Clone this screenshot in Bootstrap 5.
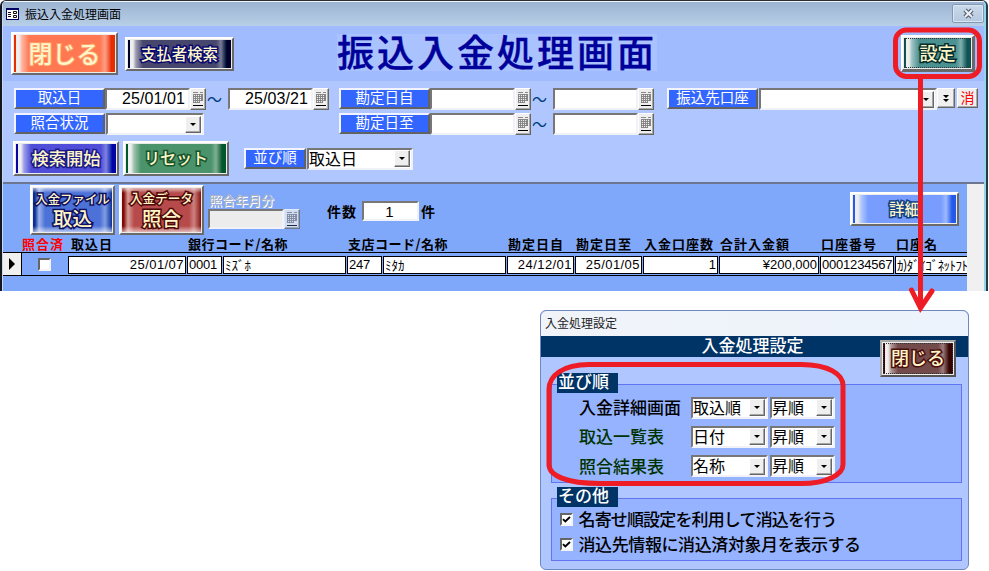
<!DOCTYPE html>
<html lang="ja">
<head>
<meta charset="utf-8">
<title>振込入金処理画面</title>
<link href="https://cdn.jsdelivr.net/npm/bootstrap@5.3.0/dist/css/bootstrap.min.css" rel="stylesheet">
<style>
body{width:989px;height:571px;background:#fff;font-family:"Liberation Sans","Noto Sans CJK JP",sans-serif;font-size:14px;line-height:1;color:#000}
.jp{font-family:"Noto Sans CJK JP",sans-serif}
/* main window */
.win-main{left:0;top:0;width:988px;height:291px;background:#b0c6ff;border-top:1px solid #2d2d33;border-left:2px solid #16171d;border-right:2px solid #2a3844;border-radius:6px 6px 0 0;overflow:hidden}
.win-inner{border-left:1px solid #c3dcf5;border-right:2px solid #8fd6ee;border-top:1px solid #eef5fc;height:290px}
.bar-title{height:24px;background:linear-gradient(#9cb4d2,#b8cfe7);padding-left:3px;font-size:12px}
.bar-title .jp{margin-left:6px}
.x-btn{width:32px;height:19px;border:1px solid #8499b2;border-radius:2px;background:linear-gradient(#cbdaeb,#b5c8df);box-shadow:inset 0 0 0 1px #d9e5f2;margin:0 0 2px auto}
.x-btn svg{flex:none}
.band-head{height:55px;background:#a0bcff;padding:6px 9px 0 8px}
.band-filter{height:101px;padding:7px 0 0 11px}
.band-list{height:109px;border-top:2px solid #6d7690;background:#80a8fa}
/* picture buttons */
.pbtn{border:2px solid;border-color:#fff #6a6a6a #6a6a6a #fff;padding:1px;background:#ececec;flex:none}
.pface{height:100%;color:#fff6c8;white-space:nowrap;font-weight:500;background:linear-gradient(90deg,var(--d) 0 2px,#eee 2px 5px,color-mix(in srgb,var(--c),#fff 45%) 8px,var(--c) 15px calc(100% - 15px),color-mix(in srgb,var(--c),#fff 28%) calc(100% - 10px),var(--d) calc(100% - 4px))}
.pface .jp{-webkit-text-stroke:3px var(--o);paint-order:stroke fill;line-height:1.1;padding-bottom:1px}
.f-orange{--c:#ff7852;--d:#e62d00;--o:#ff9c68}
.f-ink{--c:#47476d;--d:#000029;--o:#080870}
.f-teal{--c:#4c9191;--d:#0b5555;--o:#062d2d}
.f-indigo{--c:#504ed8;--d:#0505a5;--o:#1a1a88}
.f-green{--c:#4a936b;--d:#00582c;--o:#16542c}
.f-blue{--c:#4c72d8;--d:#0c2d98;--o:#101060}
.f-red{--c:#b74b4b;--d:#850808;--o:#4e0808}
.f-sky{--c:#789dff;--d:#2459ea;--o:#123f87}
.f-brown{--c:#744b4b;--d:#350505;--o:#4b0d0d}
.sq .pface{background:linear-gradient(#ffffff99 0,#ffffff00 5px calc(100% - 6px),#ffffff99),linear-gradient(90deg,var(--d) 0 2px,color-mix(in srgb,var(--c),#fff 45%) 6px,var(--c) 12px calc(100% - 12px),color-mix(in srgb,var(--c),#fff 30%) calc(100% - 7px),var(--d))}
.sq .pface .jp{line-height:1;padding:0}
.b-close{width:107px;height:43px}.b-close .jp{font-size:24px;-webkit-text-stroke-width:2px}
.b-payer{width:109px;height:34px;margin:5px 0 0 7px}.b-payer .jp{font-size:15.4px}
.b-set{width:74px;height:37px;margin:3px 0 0 auto;border-right-width:3px;border-bottom-width:3px}.b-set .jp{font-size:18px}
.b-mid{width:106px;height:35px}.b-mid .jp{font-size:17.3px}.b-mid .t-reset{font-size:16px}
.b-sq{width:85px;height:50px;margin-top:1px}
.t-file{font-size:12.4px}.t-data{font-size:12.6px}.t-big{font-size:19.5px;margin-top:3px}
.b-det{width:109px;height:34px}.b-det .jp{font-size:15.5px}
.dotted-in{outline:1px dotted #333;outline-offset:-1px}
.big-title{font-size:37px;letter-spacing:3px;color:#00009a;font-weight:500;line-height:35px;width:320px;height:37px;margin:2px 0 0 103px;white-space:nowrap;background:#aac3ff;-webkit-text-stroke:.4px #00009a}
/* form parts */
.tag{width:91px;height:21px;background:#3366ff;border:2px solid;border-color:#f2f5ff #626262 #626262 #f2f5ff;color:#fff;font-size:14.5px;flex:none;padding-bottom:2px}
.fld{height:22px;border:2px solid;border-color:#777 #f0f2f8 #f0f2f8 #777;background:#fff;flex:none;padding:0 4px 0 2px;white-space:nowrap}
.date{width:85px;font-size:16px;letter-spacing:.1px;padding-right:3px}
.calb{width:16px;height:22px;background:#efefef;border:1px solid;border-color:#fff #666 #666 #fff;box-shadow:inset -1px -1px 0 #aaa;flex:none}
.calb svg{flex:none}
.tilde{width:22px;color:#003c80;font-size:15px;flex:none;padding-left:1px}
.combo{height:22px;padding:0 1px;font-size:16px}
.lbl{padding-bottom:2px;margin-left:-1px}
.drop{width:16px;height:17px;background:#efefef;border:1px solid;border-color:#fff #666 #666 #fff;box-shadow:inset -1px -1px 0 #a5a5a5;flex:none}
.drop::after{content:"";border:3px solid transparent;border-top-color:#000;border-bottom:0}
.w98{width:98px;margin:0 135px 0 1px}.w106{width:106px;margin-left:1px}.w179{width:178px;margin-left:1px}.w76{width:77px}.w64{width:65px;margin-left:2px}
.g10{margin-left:10px}.g13{margin-left:13px}
.mini{height:20px;background:#f0f0f0;border:1px solid;border-color:#fff #666 #666 #fff;box-shadow:inset -1px -1px 0 #aaa;font-size:14px;color:red;flex:none}
.m-down{width:18px}.m-clear{width:21px;margin-left:2px;padding-bottom:2px}
.h-row{height:25px}
.r-go{margin:3px 0 0 -1px}
.t-sort{width:62px;margin-left:15px}
/* list area */
.tools{height:51px;padding-left:27px}
.dis{color:#a9b3c6;text-shadow:1px 1px 0 #fff;font-size:13px;font-weight:500;margin:8px 0 2px 1px;line-height:15px}
.dis-f{width:76px;height:20px;background:#ececec}
.dis-c{height:20px}
.count{margin:17px 0 0 27px}
.count .jp{font-size:14px}
.count .fld{width:57px;height:20px;margin:0 2px 0 5px;font-size:15px}
.bold-t{font-weight:700;font-size:13px;letter-spacing:1px;white-space:nowrap}
.mixed{letter-spacing:.5px}
.cols{display:grid;grid-template-columns:19px 45px 119px 36px 124px 36px 124px 68px 68px 76px 101px 75px 73px;width:964px}
.heads{height:17px;line-height:17px}
.heads>*{padding-left:2px}
.red{color:#f00}
.rec{height:24px;border:solid #000;border-width:1px 0;background:#80a8fa}
.rec>.cell{height:18px;margin:3px 0 0 1px;border:1px solid #000;background:#fff;font-size:13px;line-height:15px;padding:0 1px;white-space:nowrap;overflow:hidden}
.rec>.last{border-right:0;letter-spacing:-.55px}
.dt{letter-spacing:.45px}.num{letter-spacing:-.2px}
.sel{background:#f0f0f0;border-right:1px solid #000}
.cbx{width:13px;height:13px;background:#fff;border:2px solid;border-color:#666 #f4f4f4 #f4f4f4 #666;flex:none}
.gutter{width:17px;background:#f0f0f0;flex:none}
/* settings dialog */
.win-dlg{left:540px;top:310px;width:429px;height:260px;background:#b0c6ff;border:1px solid #6e87bd;border-radius:6px}
.dlg-t{height:25px;background:linear-gradient(90deg,#f0f4f9,#edf3fc);border-radius:6px 6px 0 0;font-size:12px;padding:0 0 1px 4px;color:#222}
.dlg-h{height:21px;background:#003366;color:#fff;font-size:17px;padding:0 4px 4px 0;font-weight:500}
.b-dclose{left:339px;top:29px;width:76px;height:37px;border-color:#aaa #555 #555 #aaa}.b-dclose .jp{font-size:18px}
.grp{width:411px;margin-left:10px;border:1px solid #6274f0;background:#96b3ff}
.grp-1{height:99px;margin-top:27px}.grp-2{height:63px;margin-top:15px}
.cap{width:61px;height:20px;background:#003366;color:#fff;font-size:17px;font-weight:500;margin:-12px 0 0 5px;padding:0 0 5px 1px}
.opt{font-size:17px;white-space:nowrap;font-weight:500;padding-bottom:2px}
.r-sort{height:29.3px;padding-left:27px}.r-sort .opt{width:112px}
.grn{color:#003300}
.r-chk{height:25px;padding-left:8px;gap:5.5px}
.tight{letter-spacing:-.85px;padding-bottom:3px}.snug{letter-spacing:-.4px;padding-bottom:3px}
.notes{left:0;top:0}
</style>
</head>
<body class="position-relative overflow-hidden m-0">
<svg width="0" height="0" class="position-absolute">
  <symbol id="cal" viewBox="0 0 12 16"><path d="M1 1.500h5M8 1.500h3" stroke="#888"/><path d="M1 3.500h10M1 5.500h10M1 7.500h10M1 9.500h10M1 11.500h7M1.500 3v9M3.500 3v9M5.500 3v9M7.500 3v9M9.500 3v7M10.500 3v7" stroke="#808080" stroke-width=".9"/><path d="M1 14.500h10" stroke="#000"/></symbol>
  <symbol id="chk" viewBox="0 0 9 9"><path d="M1 4.200l2.300 2.300L8 2" fill="none" stroke="#000" stroke-width="1.900"/></symbol>
</svg>

<main class="win-main position-absolute"><div class="win-inner">
  <div class="bar-title d-flex align-items-center">
    <svg width="13" height="12" viewBox="0 0 13 12"><path fill="#000060" d="M0 0h13v12H0z"/><path fill="#fff" d="M1 2h11v9H1z"/><path d="M2 4.500h3M2 6.500h3M2 8.500h3M7.500 3.500h3v2h-3zM7.500 7.500h3v2h-3z" stroke="#111" fill="none"/></svg>
    <span class="jp">振込入金処理画面</span>
    <div class="x-btn d-flex align-items-center justify-content-center"><svg width="13" height="11" viewBox="0 0 13 11"><path d="M3 2l7 7M10 2l-7 7" stroke="#555b6b" stroke-width="4.400"/><path d="M3 2l7 7M10 2l-7 7" stroke="#e8eef6" stroke-width="2.200"/></svg></div>
  </div>

  <header class="band-head d-flex align-items-start">
    <div class="pbtn b-close"><div class="pface f-orange d-flex align-items-center justify-content-center"><span class="jp">閉じる</span></div></div>
    <div class="pbtn b-payer"><div class="pface f-ink d-flex align-items-center justify-content-center"><span class="jp">支払者検索</span></div></div>
    <h1 class="big-title jp mb-0">振込入金処理画面</h1>
    <div class="pbtn b-set"><div class="pface f-teal dotted-in d-flex align-items-center justify-content-center"><span class="jp">設定</span></div></div>
  </header>

  <section class="band-filter">
    <div class="d-flex h-row align-items-start">
      <div class="tag jp d-flex align-items-center justify-content-center">取込日</div>
      <div class="fld date d-flex align-items-center justify-content-end">25/01/01</div>
      <div class="calb d-flex align-items-center justify-content-center"><svg width="12" height="16"><use href="#cal"/></svg></div>
      <div class="tilde jp lh-base">～</div>
      <div class="fld date d-flex align-items-center justify-content-end">25/03/21</div>
      <div class="calb d-flex align-items-center justify-content-center"><svg width="12" height="16"><use href="#cal"/></svg></div>
      <div class="tag g10 jp d-flex align-items-center justify-content-center">勘定日自</div>
      <div class="fld date"></div>
      <div class="calb d-flex align-items-center justify-content-center"><svg width="12" height="16"><use href="#cal"/></svg></div>
      <div class="tilde jp lh-base">～</div>
      <div class="fld date"></div>
      <div class="calb d-flex align-items-center justify-content-center"><svg width="12" height="16"><use href="#cal"/></svg></div>
      <div class="tag g13 jp d-flex align-items-center justify-content-center">振込先口座</div>
      <div class="fld combo w179 d-flex align-items-center justify-content-end"><span class="drop d-flex align-items-center justify-content-center"></span></div>
      <div class="mini m-down d-flex align-items-center justify-content-center"><svg width="8" height="9" viewBox="0 0 8 9"><path d="M1 1h6L4 4zM1 5h6L4 8z"/></svg></div>
      <div class="mini m-clear jp d-flex align-items-center justify-content-center">消</div>
    </div>
    <div class="d-flex h-row align-items-start">
      <div class="tag jp d-flex align-items-center justify-content-center">照合状況</div>
      <div class="fld combo w98 d-flex align-items-center justify-content-end"><span class="drop d-flex align-items-center justify-content-center"></span></div>
      <div class="tag jp d-flex align-items-center justify-content-center">勘定日至</div>
      <div class="fld date"></div>
      <div class="calb d-flex align-items-center justify-content-center"><svg width="12" height="16"><use href="#cal"/></svg></div>
      <div class="tilde jp lh-base">～</div>
      <div class="fld date"></div>
      <div class="calb d-flex align-items-center justify-content-center"><svg width="12" height="16"><use href="#cal"/></svg></div>
    </div>
    <div class="d-flex align-items-center r-go">
      <div class="pbtn b-mid"><div class="pface f-indigo d-flex align-items-center justify-content-center"><span class="jp">検索開始</span></div></div>
      <div class="pbtn b-mid ms-1"><div class="pface f-green d-flex align-items-center justify-content-center"><span class="jp t-reset">リセット</span></div></div>
      <div class="tag t-sort jp d-flex align-items-center justify-content-center">並び順</div>
      <div class="fld combo w106 jp d-flex align-items-center justify-content-between"><span class="lbl">取込日</span><span class="drop d-flex align-items-center justify-content-center"></span></div>
    </div>
  </section>

  <section class="band-list d-flex">
    <div class="flex-fill">
      <div class="tools d-flex align-items-start">
        <div class="pbtn b-sq sq"><div class="pface f-blue d-flex flex-column align-items-center justify-content-center"><span class="jp t-file">入金ファイル</span><span class="jp t-big">取込</span></div></div>
        <div class="pbtn b-sq sq ms-1"><div class="pface f-red d-flex flex-column align-items-center justify-content-center"><span class="jp t-data">入金データ</span><span class="jp t-big">照合</span></div></div>
        <div class="ms-1">
          <div class="dis jp">照合年月分</div>
          <div class="d-flex"><div class="fld dis-f"></div><div class="calb dis-c opacity-75 d-flex align-items-center justify-content-center"><svg width="12" height="16"><use href="#cal"/></svg></div></div>
        </div>
        <div class="count d-flex align-items-center">
          <span class="bold-t jp">件数</span>
          <div class="fld d-flex align-items-center justify-content-center">1</div>
          <span class="bold-t jp">件</span>
        </div>
        <div class="pbtn b-det ms-auto mt-2"><div class="pface f-sky d-flex align-items-center justify-content-center"><span class="jp">詳細</span></div></div>
        <div class="pe-2 me-0"></div>
      </div>
      <div class="cols heads bold-t jp">
        <span class="red" style="grid-column:1/3;padding-left:19px">照合済</span><span class="ps-1">取込日</span>
        <span class="mixed" style="grid-column:4/6">銀行コード/名称</span><span class="mixed" style="grid-column:6/8">支店コード/名称</span>
        <span>勘定日自</span><span>勘定日至</span><span>入金口座数</span><span>合計入金額</span><span>口座番号</span><span>口座名</span>
      </div>
      <div class="cols rec">
        <div class="sel d-flex align-items-center justify-content-center"><svg width="8" height="12" viewBox="0 0 8 12"><path d="M1 0l6 6-6 6z"/></svg></div>
        <div class="d-flex align-items-center ps-3"><span class="cbx"></span></div>
        <div class="cell dt text-end">25/01/07</div>
        <div class="cell num">0001</div>
        <div class="cell jp">ﾐｽﾞﾎ</div>
        <div class="cell num">247</div>
        <div class="cell jp">ﾐﾀｶ</div>
        <div class="cell dt text-end">24/12/01</div>
        <div class="cell dt text-end">25/01/05</div>
        <div class="cell text-end">1</div>
        <div class="cell text-end">¥200,000</div>
        <div class="cell num">0001234567</div>
        <div class="cell last jp">ｶ)ﾀﾞｲｺﾞﾈｯﾄﾌﾄ</div>
      </div>
    </div>
    <div class="gutter"></div>
  </section>
</div></main>

<aside class="win-dlg position-absolute overflow-hidden">
  <div class="dlg-t jp d-flex align-items-center">入金処理設定</div>
  <div class="dlg-h jp d-flex align-items-center justify-content-center">入金処理設定</div>
  <div class="pbtn b-dclose position-absolute"><div class="pface f-brown dotted-in d-flex align-items-center justify-content-center"><span class="jp">閉じる</span></div></div>
  <section class="grp grp-1">
    <div class="cap jp d-flex align-items-center">並び順</div>
    <div class="r-sort d-flex align-items-center"><span class="opt jp">入金詳細画面</span>
      <div class="fld combo w76 jp d-flex align-items-center justify-content-between"><span class="lbl">取込順</span><span class="drop d-flex align-items-center justify-content-center"></span></div>
      <div class="fld combo w64 jp d-flex align-items-center justify-content-between"><span class="lbl">昇順</span><span class="drop d-flex align-items-center justify-content-center"></span></div></div>
    <div class="r-sort d-flex align-items-center"><span class="opt grn jp">取込一覧表</span>
      <div class="fld combo w76 jp d-flex align-items-center justify-content-between"><span class="lbl">日付</span><span class="drop d-flex align-items-center justify-content-center"></span></div>
      <div class="fld combo w64 jp d-flex align-items-center justify-content-between"><span class="lbl">昇順</span><span class="drop d-flex align-items-center justify-content-center"></span></div></div>
    <div class="r-sort d-flex align-items-center"><span class="opt grn jp">照合結果表</span>
      <div class="fld combo w76 jp d-flex align-items-center justify-content-between"><span class="lbl">名称</span><span class="drop d-flex align-items-center justify-content-center"></span></div>
      <div class="fld combo w64 jp d-flex align-items-center justify-content-between"><span class="lbl">昇順</span><span class="drop d-flex align-items-center justify-content-center"></span></div></div>
  </section>
  <section class="grp grp-2">
    <div class="cap jp d-flex align-items-center">その他</div>
    <div class="r-chk d-flex align-items-center"><span class="cbx d-flex"><svg width="9" height="9"><use href="#chk"/></svg></span><span class="opt jp tight">名寄せ順設定を利用して消込を行う</span></div>
    <div class="r-chk d-flex align-items-center"><span class="cbx d-flex"><svg width="9" height="9"><use href="#chk"/></svg></span><span class="opt jp snug">消込先情報に消込済対象月を表示する</span></div>
  </section>
</aside>

<svg class="notes position-absolute" width="989" height="571" viewBox="0 0 989 571" fill="none" stroke="#ee1c24" stroke-width="5" stroke-linecap="round">
  <rect x="895.500" y="30" width="84" height="46.500" rx="11"/>
  <path d="M920.500 78v228M911.500 290l9 18 11.500-17"/>
  <path d="M590 364.500h211c28 0 42 10 42 21v79c0 10-16 19-42 19H600c-34 0-51-8-51-19v-75c0-14 14-25 40-25z"/>
</svg>
<script src="https://cdn.jsdelivr.net/npm/bootstrap@5.3.0/dist/js/bootstrap.bundle.min.js"></script>
</body>
</html>
